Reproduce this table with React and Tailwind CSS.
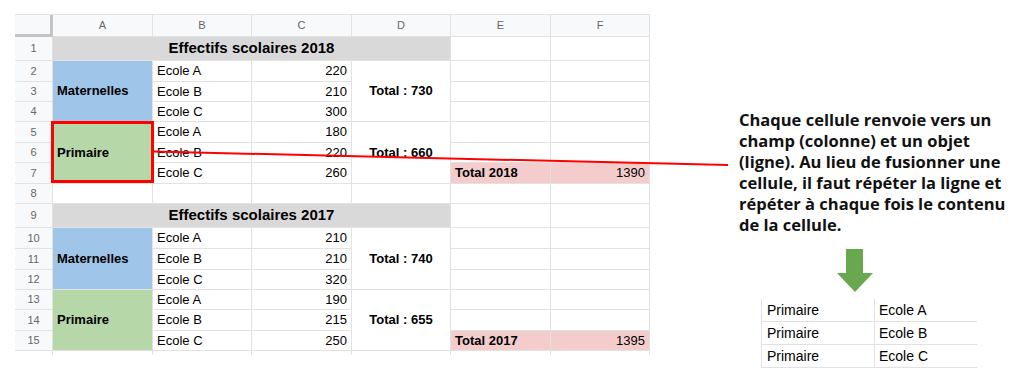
const cell = "border-r border-b border-[#e2e2e2] flex items-center px-[4px] text-[13px] text-black";
const num = "border-r border-b border-[#e2e2e2] bg-[#f8f9fa] flex items-center justify-center text-[11px] text-[#666]";

function Group({ rows, label, color, schools, total, grand }) {
  return (
    <>
      <div className={num}>{rows[0]}</div>
      <div className={`${cell} row-span-3 font-bold ${color}`}>{label}</div>
      <div className={cell}>Ecole A</div>
      <div className={`${cell} justify-end`}>{schools[0]}</div>
      <div className={`${cell} row-span-3 justify-center font-bold`}>{total}</div>
      <div className={cell}></div>
      <div className={cell}></div>

      <div className={num}>{rows[1]}</div>
      <div className={cell}>Ecole B</div>
      <div className={`${cell} justify-end`}>{schools[1]}</div>
      <div className={cell}></div>
      <div className={cell}></div>

      <div className={num}>{rows[2]}</div>
      <div className={cell}>Ecole C</div>
      <div className={`${cell} justify-end`}>{schools[2]}</div>
      {grand ? (
        <>
          <div className={`${cell} bg-[#f4cccc] font-bold`}>{grand[0]}</div>
          <div className={`${cell} bg-[#f4cccc] justify-end`}>{grand[1]}</div>
        </>
      ) : (
        <>
          <div className={cell}></div>
          <div className={cell}></div>
        </>
      )}
    </>
  );
}

function Title({ n, text }) {
  return (
    <>
      <div className={num}>{n}</div>
      <div className={`${cell} col-span-4 justify-center bg-[#d9d9d9] font-bold text-[15px]`}>{text}</div>
      <div className={cell}></div>
      <div className={cell}></div>
    </>
  );
}

function Sheet() {
  return (
    <div
      className="grid grid-cols-[38px_100px_99px_100px_99px_100px_99px] grid-rows-[22px_24px_21px_20px_20px_21px_20px_21px_20px_24px_21px_21px_20px_20px_21px_20px_4px] border-t border-[#e2e2e2]"
      style={{ fontFamily: '"Liberation Sans", Arial, sans-serif' }}
    >
      <div className="bg-[#f8f9fa] border-r-[3px] border-b-[3px] border-[#c4c4c4]"></div>
      {["A", "B", "C", "D", "E", "F"].map((l) => (
        <div key={l} className="border-r border-b border-[#e2e2e2] bg-[#f8f9fa] flex items-center justify-center text-[11px] text-[#666]">
          {l}
        </div>
      ))}

      <Title n={1} text="Effectifs scolaires 2018" />
      <Group rows={[2, 3, 4]} label="Maternelles" color="bg-[#9fc5e8]" schools={[220, 210, 300]} total="Total : 730" />
      <Group rows={[5, 6, 7]} label="Primaire" color="bg-[#b6d7a8]" schools={[180, 220, 260]} total="Total : 660" grand={["Total 2018", 1390]} />

      <div className={num}>8</div>
      {[0, 1, 2, 3, 4, 5].map((i) => (
        <div key={i} className={cell}></div>
      ))}

      <Title n={9} text="Effectifs scolaires 2017" />
      <Group rows={[10, 11, 12]} label="Maternelles" color="bg-[#9fc5e8]" schools={[210, 210, 320]} total="Total : 740" />
      <Group rows={[13, 14, 15]} label="Primaire" color="bg-[#b6d7a8]" schools={[190, 215, 250]} total="Total : 655" grand={["Total 2017", 1395]} />

      {[0, 1, 2, 3, 4, 5, 6].map((i) => (
        <div key={i} className="border-r border-[#e2e2e2]"></div>
      ))}
    </div>
  );
}

const lines = [
  "Chaque cellule renvoie vers un",
  "champ (colonne) et un objet",
  "(ligne). Au lieu de fusionner une",
  "cellule, il faut répéter la ligne et",
  "répéter à chaque fois le contenu",
  "de la cellule.",
];

export default function App() {
  return (
    <div className="relative w-[1024px] h-[392px] bg-white overflow-hidden">
      <div className="flex">
        <div className="pl-[15px] pt-[14px]">
          <Sheet />
        </div>
        <div className="ml-[89px] pt-[109px] flex flex-col">
          <div
            className="text-[16.5px] leading-[21px] font-bold text-[#111] whitespace-nowrap"
            style={{ fontFamily: '"Open Sans", sans-serif' }}
          >
            {lines.map((l) => (
              <div key={l}>{l}</div>
            ))}
          </div>
          <svg className="ml-[98px] mt-[14px]" width="36" height="43" viewBox="0 0 36 43">
            <polygon points="9,0 26,0 26,24 36,24 18,43 0,24 9,24" fill="#6aa84f" />
          </svg>
          <div
            className="ml-[22px] mt-[7px] w-[216px] border-l border-[#e2e2e2] text-[14px] text-black"
            style={{ fontFamily: '"Liberation Sans", Arial, sans-serif' }}
          >
            {["Ecole A", "Ecole B", "Ecole C"].map((s) => (
              <div key={s} className="flex h-[23px] border-b border-[#e2e2e2]">
                <div className="w-[113px] border-r border-[#e2e2e2] flex items-center pl-[5px]">Primaire</div>
                <div className="flex items-center pl-[4px]">{s}</div>
              </div>
            ))}
          </div>
        </div>
      </div>

      {/* surlignage de la cellule fusionnée + trait vers l'explication */}
      <div className="absolute left-[51px] top-[121px] w-[103px] h-[62px] border-[3px] border-[#ff0000]"></div>
      <svg className="absolute left-0 top-0 pointer-events-none" width="1024" height="392">
        <line x1="153" y1="151.5" x2="728" y2="165" stroke="#ff0000" strokeWidth="2" />
      </svg>
    </div>
  );
}
